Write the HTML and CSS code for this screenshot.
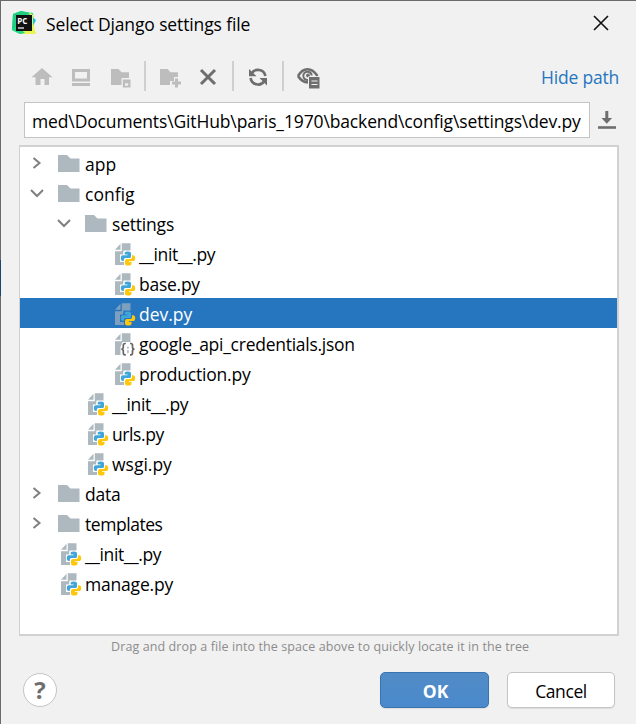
FILE: index.html
```
<!DOCTYPE html>
<html lang="en">
<head>
<meta charset="utf-8">
<title>Select Django settings file</title>
<link rel="stylesheet" href="styles.css">
</head>
<body>
<svg class="defs" aria-hidden="true">
  <symbol id="right" viewBox="0 0 14 14"><path d="M3.5 2l6 5-6 5" fill="none" stroke="#7f7f7f" stroke-width="2"/></symbol>
  <symbol id="down" viewBox="0 0 14 14"><path d="M1 4l6 6 6-6" fill="none" stroke="#7f7f7f" stroke-width="2"/></symbol>
  <symbol id="folder" viewBox="0 0 24 26"><path d="M0 4h9l3.5 3.5H21.5V21H0z" fill="#adb8bf"/></symbol>
  <symbol id="page" viewBox="0 0 24 26"><path d="M9.8 2.3H18.5V24H3V10.2h6.8z" fill="#adb8bf"/><path d="M8.5 2.8V8.8H3z" fill="#adb8bf"/></symbol>
  <symbol id="snakes" viewBox="0 0 24 26">
    <path class="halo" d="M11.5 9.500h7.500l1.300 2v2.300h3.200v7l-4 4.500h-7.500v-4.300h-4v-7.500h3z"/>
    <path d="M12.700 11.500Q13 10.500 16 10.500Q19 10.500 19 12.500V15.500Q19 17 17.500 17H13.500Q11.800 17 11.800 18.800V20H11Q8.800 20 8.800 17Q8.800 14.300 11 14.300H15.500V13.600H12.700z" fill="#40a5d8"/>
    <path d="M20 14.300H21Q23.200 14.300 23.200 17.200Q23.200 20 21 20H17V20.800H19.500V22.500Q19.500 24.500 16.300 24.500Q13 24.500 13 22.500V19.800Q13 18 14.800 18H18.200Q20 18 20 16.300z" fill="#fdc80c"/>
  </symbol>
  <symbol id="py" viewBox="0 0 24 26"><use href="#page"/><use href="#snakes"/></symbol>
  <symbol id="pysel" viewBox="0 0 24 26"><g opacity=".65"><use href="#page"/></g><use href="#snakes"/></symbol>
  <symbol id="json" viewBox="0 0 24 26"><use href="#page"/><path d="M10.500 11h9.500v4h4V25H8.500V16z" fill="#fff"/><path d="M13.800 12.500h-.8q-1.700 0-1.700 1.800v2q0 1.700-1.900 1.900 1.900.2 1.900 1.900v2q0 1.800 1.700 1.800h.8M18 12.500h.8q1.700 0 1.700 1.800v2q0 1.700 1.900 1.900-1.900.2-1.900 1.900v2q0 1.800-1.700 1.800H18" fill="none" stroke="#666" stroke-width="1.700"/><path d="M15 15.800h1.800v1.700H15zM15 19.300h1.800v2.500l-1.500.7z" fill="#adb8bf"/></symbol>
</svg>
<main class="dialog">
  <header class="title">
    <svg class="logo" viewBox="0 0 24 24"><path d="M1 3L9 0l12 2 1 12-3 8-11 1-8-4z" fill="#22d88f"/><path d="M1 3L9 0l7 2-9 9-7 8z" fill="#20cf80"/><path d="M19 5l5 4-3 6z" fill="#07c3f2"/><path d="M17 1l4 3 0 8 3 11-13 0L2 20 19 9z" fill="#e8f456"/><path d="M0 19l5-4 8 7-5 1z" fill="#20d888"/><path d="M4 4h16v16H4z" fill="#111"/><path d="M6 17h6" stroke="#fff" stroke-width="1.200"/><text x="5.300" y="12.500" class="pc">PC</text></svg>
    <h1><span class="t-title">Select Django settings file</span></h1>
    <svg class="close" viewBox="0 0 16 16"><path d="M1 1l14 14M15 1L1 15" stroke="#111" stroke-width="1.600"/></svg>
  </header>
  <div class="toolbar">
    <svg class="tool home" viewBox="0 0 24 24"><path d="M12 3L22.500 12.300H19V20H14.500V14h-4v6H5.500V12.300H1.500z" fill="#bdbdbd"/></svg>
    <svg class="tool desktop" viewBox="0 0 24 24"><path d="M3 4h18v12.500H3zM6 7v6.500h12V7zM3 18h18v3H3z" fill="#bdbdbd" fill-rule="evenodd"/></svg>
    <svg class="tool project" viewBox="0 0 24 24"><path d="M2 4h7.500l3 3.300H20V13h-7.500v7H2z" fill="#bdbdbd"/><path d="M13.800 14.500H21.500V22.500h-7.700zM16 18.300v2.500h3.200v-2.500z" fill="#bdbdbd" fill-rule="evenodd"/></svg>
    <i class="sep s1"></i>
    <svg class="tool create" viewBox="0 0 24 24"><path d="M2 4h7.500l3 3.300H20V12h-4v4h-4v4H2z" fill="#bdbdbd"/><path d="M18.500 13.500v9M14 18h9" stroke="#bdbdbd" stroke-width="3"/></svg>
    <svg class="tool delete" viewBox="0 0 24 24"><path d="M5 5l14 14M19 5L5 19" stroke="#6e6e6e" stroke-width="3"/></svg>
    <i class="sep s2"></i>
    <svg class="tool refresh" viewBox="0 0 24 24"><path d="M5.500 8.500A7.600 7.600 0 0 1 19.400 11M18.500 16A7.600 7.600 0 0 1 4.600 13" fill="none" stroke="#6e6e6e" stroke-width="2.700"/><path d="M3 4v7.300h7.500zM21 20.500V13h-7.500z" fill="#6e6e6e"/></svg>
    <i class="sep s3"></i>
    <svg class="tool hidden" viewBox="0 0 24 24"><path d="M2 11Q6 4.200 11.500 4.200T21.500 11M2 11Q6 17.200 12 17.500" fill="none" stroke="#6e6e6e" stroke-width="2.600"/><path d="M12 15A4.200 4.200 0 1 1 15.700 10.500" fill="none" stroke="#6e6e6e" stroke-width="2"/><circle cx="12" cy="10.500" r="1.900" fill="#6e6e6e"/><path d="M12 11.500h11V24h-11z" fill="#f1f1f1"/><path d="M13 12H23.500V23.500H13z" fill="#6e6e6e"/><path d="M15.500 16h6M15.500 19.500h6" stroke="#f1f1f1" stroke-width="1.200"/></svg>
    <a><span class="t-hide">Hide path</span></a>
  </div>
  <div class="path">
    <div class="field"><span class="t-path">med\Documents\GitHub\paris_1970\backend\config\settings\dev.py</span></div>
    <svg class="history" viewBox="0 0 20 20"><path d="M9.800 1v9" stroke="#6e6e6e" stroke-width="3"/><path d="M4.500 8h10.600L9.800 13.800z" fill="#6e6e6e"/><path d="M1 17.500h18" stroke="#6e6e6e" stroke-width="2.600"/></svg>
  </div>
  <div class="tree">
    <div class="row l0"><svg class="chev"><use href="#right"/></svg><svg class="ico"><use href="#folder"/></svg><span class="t-app">app</span></div>
    <div class="row l0"><svg class="chev"><use href="#down"/></svg><svg class="ico"><use href="#folder"/></svg><span class="t-config">config</span></div>
    <div class="row l1"><svg class="chev"><use href="#down"/></svg><svg class="ico"><use href="#folder"/></svg><span class="t-settings">settings</span></div>
    <div class="row l2"><svg class="ico"><use href="#py"/></svg><span class="t-init">__init__.py</span></div>
    <div class="row l2"><svg class="ico"><use href="#py"/></svg><span class="t-base">base.py</span></div>
    <div class="row l2 selected"><svg class="ico"><use href="#pysel"/></svg><span class="t-dev">dev.py</span></div>
    <div class="row l2"><svg class="ico"><use href="#json"/></svg><span class="t-google">google_api_credentials.json</span></div>
    <div class="row l2"><svg class="ico"><use href="#py"/></svg><span class="t-production">production.py</span></div>
    <div class="row l1 leaf"><svg class="ico"><use href="#py"/></svg><span class="t-init">__init__.py</span></div>
    <div class="row l1 leaf"><svg class="ico"><use href="#py"/></svg><span class="t-urls">urls.py</span></div>
    <div class="row l1 leaf"><svg class="ico"><use href="#py"/></svg><span class="t-wsgi">wsgi.py</span></div>
    <div class="row l0"><svg class="chev"><use href="#right"/></svg><svg class="ico"><use href="#folder"/></svg><span class="t-data">data</span></div>
    <div class="row l0"><svg class="chev"><use href="#right"/></svg><svg class="ico"><use href="#folder"/></svg><span class="t-templates">templates</span></div>
    <div class="row l0 leaf"><svg class="ico"><use href="#py"/></svg><span class="t-init">__init__.py</span></div>
    <div class="row l0 leaf"><svg class="ico"><use href="#py"/></svg><span class="t-manage">manage.py</span></div>
  </div>
  <p class="hint"><span class="t-hint">Drag and drop a file into the space above to quickly locate it in the tree</span></p>
  <footer>
    <button class="help">?</button>
    <button class="ok">OK</button>
    <button class="cancel"><span class="t-cancel">Cancel</span></button>
  </footer>
</main>
</body>
</html>
```
FILE: styles.css
```
* { box-sizing: border-box; }
body { margin: 0; font: 17.5px/24px "Open Sans", "Noto Sans", sans-serif; color: #000; }
svg { display: block; flex: none; }
.defs { position: absolute; width: 0; height: 0; }
.dialog { width: 636px; height: 724px; background: #f1f1f1; border: 0 solid #666; border-width: 1px 0 0 1px; border-image: linear-gradient(#6b6b6b 260px, #1b4773 260px, #1b4773 296px, #6b6b6b 296px) 1; overflow: hidden; }
span { white-space: nowrap; }
.title { display: flex; align-items: center; height: 46px; padding: 0 27px 0 11px; }
.logo { width: 24px; height: 24px; margin-top: -2px; }
.pc { font: bold 8px "Open Sans", sans-serif; fill: #fff; }
h1 { margin: 0 auto 0 10px; font-size: 17.5px; font-weight: 400; }
.close { width: 16px; height: 16px; margin-top: -2px; }
.toolbar { display: flex; align-items: center; height: 55px; padding: 4px 17px 0 29px; }
.tool { width: 24px; height: 24px; }
.desktop { margin-left: 15px; }
.project { margin-left: 16px; }
.create { margin-left: 12px; }
.delete { margin-left: 14px; }
.refresh { margin-left: 12px; }
.hidden { margin-left: 12px; }
.sep { width: 2px; height: 30px; margin-top: -1px; background: #cfcfcf; }
.s1 { margin-left: 11px; }
.s2 { margin-left: 12px; }
.s3 { margin-left: 12px; }
.toolbar a { margin-left: auto; color: #2675bf; }
.path { display: flex; align-items: center; padding-left: 23px; height: 36px; }
.field { width: 566px; height: 36px; display: flex; align-items: center; padding: 2px 0 0 7px; background: #fff; border: 1px solid #c4c4c4; }
.history { width: 20px; height: 20px; margin-left: 7px; }
.tree { width: 600px; height: 491px; margin: 7px 0 0 18px; padding-top: 1px; background: #fff; border: 2px solid #d1d1d1; border-left-width: 1px; }
.row { display: flex; align-items: center; height: 30px; padding-left: 10px; }
.row.l1 { padding-left: 37px; }
.row.l2 { padding-left: 92px; }
.row.l0.leaf { padding-left: 38px; }
.row.l1.leaf { padding-left: 65px; }
.row span { margin-left: 3px; padding-top: 2px; }
.chev { width: 14px; height: 14px; margin: -1px 14px 0 0; }
.ico { width: 24px; height: 26px; margin-top: 2px; }
.row { --halo: #fff; }
.row.selected { --halo: #2675bf; background: #2675bf; color: #fff; }
.halo { fill: var(--halo); }
.hint { margin: 0; height: 24px; line-height: 22px; padding-left: 110px; font-size: 12.5px; color: #8c8c8c; }
footer { display: flex; align-items: center; height: 36px; margin-top: 12px; padding: 0 21px 0 22px; }
button { font: inherit; padding: 0; border-radius: 5px; text-align: center; }
.help { width: 34px; height: 34px; border: 1px solid #c4c4c4; border-radius: 50%; background: #fff; color: #6e6e6e; font-weight: 700; font-size: 24px; line-height: 30px; margin-right: auto; }
.ok { width: 109px; height: 36px; margin-right: 18px; padding: 2px 0 0 2px; border: 1px solid #3b72b0; color: #fff; font-weight: 700; background: linear-gradient(#528cc7, #4989cc); box-shadow: 0 1px 1px #ddd; }
.cancel { width: 108px; height: 36px; padding-top: 2px; background: #fff; border: 1px solid #c4c4c4; box-shadow: 0 1px 1px #ddd; }
.t-title { letter-spacing: -.13px; }
.t-hide { letter-spacing: -.2px; }
.t-path { letter-spacing: -.13px; }
.t-settings, .t-production, .t-manage, .t-data { letter-spacing: -.2px; }
.t-init, .t-urls { letter-spacing: -.4px; }
.t-base, .t-google { letter-spacing: -.26px; }
.t-templates { letter-spacing: -.45px; }
.t-cancel { letter-spacing: -.4px; }
.t-hint { letter-spacing: .1px; }
```
